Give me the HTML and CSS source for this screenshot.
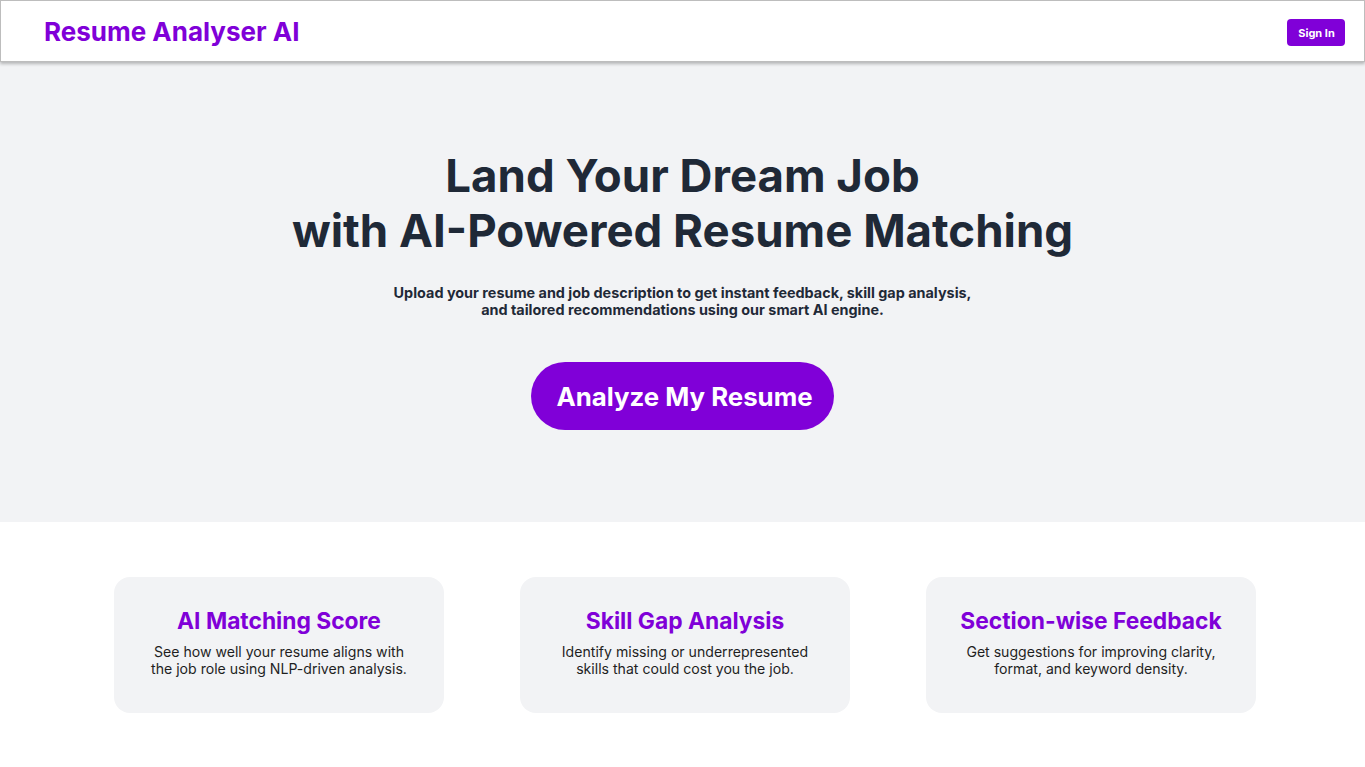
FILE: index.html
```html
<!DOCTYPE html>
<html lang="en">
<head>
<meta charset="utf-8">
<title>Resume Analyser AI</title>
<link rel="stylesheet" href="styles.css">
</head>
<body>
<header class="topbar">
  <div class="logo">Resume Analyser AI</div>
  <button class="signin">Sign In</button>
</header>
<section class="hero">
  <h1 class="hero-title">Land Your Dream Job<br>with AI-Powered Resume Matching</h1>
  <p class="hero-sub">Upload your resume and job description to get instant feedback, skill gap analysis,<br>and tailored recommendations using our smart AI engine.</p>
  <button class="cta">Analyze My Resume</button>
</section>
<section class="features">
  <div class="card">
    <h3 class="card-title">AI Matching Score</h3>
    <p class="card-text">See how well your resume aligns with<br>the job role using NLP-driven analysis.</p>
  </div>
  <div class="card">
    <h3 class="card-title">Skill Gap Analysis</h3>
    <p class="card-text">Identify missing or underrepresented<br>skills that could cost you the job.</p>
  </div>
  <div class="card">
    <h3 class="card-title">Section-wise Feedback</h3>
    <p class="card-text">Get suggestions for improving clarity,<br>format, and keyword density.</p>
  </div>
</section>
</body>
</html>
```
FILE: styles.css
```css
* { box-sizing: border-box; }
html, body { margin: 0; padding: 0; }
body {
  font-family: Inter, "Noto Sans", sans-serif;
  background: #ffffff;
  color: #1f2937;
}
.topbar {
  height: 62px;
  border: 1px solid #bdbdbd;
  background: #ffffff;
  box-shadow: 0 2px 3px rgba(0,0,0,0.25);
  display: flex;
  align-items: center;
  justify-content: space-between;
  padding: 0 19px 0 43px;
  position: relative;
  z-index: 2;
}
.logo {
  font-size: 26px;
  font-weight: 700;
  color: #8000d8;
  margin-top: 1px;
}
.signin {
  font-family: inherit;
  background: #8000d8;
  color: #fff;
  border: none;
  border-radius: 4px;
  font-size: 11px;
  font-weight: 700;
  width: 58px;
  height: 27px;
  padding: 0 0 0 1px;
  margin-top: 3px;
}
.hero {
  background: #f2f3f5;
  height: 460px;
  display: flex;
  flex-direction: column;
  align-items: center;
  padding-top: 86px;
}
.hero-title {
  margin: 0;
  font-size: 45.6px;
  line-height: 55px;
  font-weight: 700;
  text-align: center;
  color: #1f2937;
}
.hero-sub {
  margin: 26px 0 0;
  font-size: 14.4px;
  line-height: 17px;
  font-weight: 700;
  text-align: center;
  color: #1f2937;
}
.cta {
  font-family: inherit;
  margin-top: 44px;
  width: 303px;
  height: 68px;
  border: none;
  border-radius: 34px;
  background: #8000d8;
  color: #fff;
  font-size: 25.8px;
  font-weight: 700;
  padding: 0 0 0 4px;
}
.features {
  display: grid;
  grid-template-columns: repeat(3, 330px);
  column-gap: 76px;
  justify-content: center;
  padding: 55px 0 0 5px;
}
.card {
  background: #f2f3f5;
  border-radius: 16px;
  height: 136px;
  display: flex;
  flex-direction: column;
  align-items: center;
  padding-top: 30px;
}
.card-title {
  margin: 0;
  font-size: 22.8px;
  line-height: 28px;
  font-weight: 700;
  color: #8000d8;
}
.card-text {
  margin: 8px 0 0;
  font-size: 14.1px;
  line-height: 17px;
  color: #1f1f1f;
  text-align: center;
}
```
